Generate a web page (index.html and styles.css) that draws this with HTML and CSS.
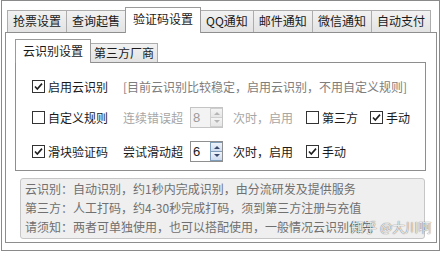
FILE: index.html
```html
<!DOCTYPE html>
<html lang="zh-CN">
<head>
<meta charset="utf-8">
<link rel="stylesheet" href="styles.css">
</head>
<body>
<div class="window">
  <div class="tabs">
    <div class="tab">抢票设置</div>
    <div class="tab">查询起售</div>
    <div class="tab active">验证码设置</div>
    <div class="tab">QQ通知</div>
    <div class="tab">邮件通知</div>
    <div class="tab">微信通知</div>
    <div class="tab">自动支付</div>
  </div>
  <div class="panel">
    <div class="subtabs">
      <div class="subtab active">云识别设置</div>
      <div class="subtab">第三方厂商</div>
    </div>
    <div class="group">
      <div class="row r1">
        <div class="opt"><span class="cb checked"><svg viewBox="0 0 13 13" width="13" height="13"><path d="M3 6.5 L5.3 9 L10 3.6" fill="none" stroke="#1e1e1e" stroke-width="1.6"/></svg></span><span>启用云识别</span></div>
        <div class="rest"><span class="note">[目前云识别比较稳定，启用云识别，不用自定义规则]</span></div>
      </div>
      <div class="row r2">
        <div class="opt"><span class="cb"></span><span>自定义规则</span></div>
        <div class="rest">
          <span class="dim lbl">连续错误超</span>
          <div class="spin disabled"><span class="val">8</span><span class="btns"><span class="btn up"></span><span class="btn down"></span></span></div>
          <span class="dim after">次时，启用</span>
          <div class="opt small"><span class="cb"></span><span>第三方</span></div>
          <div class="opt small"><span class="cb checked"><svg viewBox="0 0 13 13" width="13" height="13"><path d="M3 6.5 L5.3 9 L10 3.6" fill="none" stroke="#1e1e1e" stroke-width="1.6"/></svg></span><span>手动</span></div>
        </div>
      </div>
      <div class="row r3">
        <div class="opt"><span class="cb checked"><svg viewBox="0 0 13 13" width="13" height="13"><path d="M3 6.5 L5.3 9 L10 3.6" fill="none" stroke="#1e1e1e" stroke-width="1.6"/></svg></span><span>滑块验证码</span></div>
        <div class="rest">
          <span class="lbl">尝试滑动超</span>
          <div class="spin"><span class="val">6</span><span class="btns"><span class="btn up"></span><span class="btn down"></span></span></div>
          <span class="after">次时，启用</span>
          <div class="opt small"><span class="cb checked"><svg viewBox="0 0 13 13" width="13" height="13"><path d="M3 6.5 L5.3 9 L10 3.6" fill="none" stroke="#1e1e1e" stroke-width="1.6"/></svg></span><span>手动</span></div>
        </div>
      </div>
    </div>
    <div class="info">
      <p>云识别：自动识别，约1秒内完成识别，由分流研发及提供服务</p>
      <p>第三方：人工打码，约4-30秒完成打码，须到第三方注册与充值</p>
      <p>请须知：两者可单独使用，也可以搭配使用，一般情况云识别优先</p>
    </div>
  </div>
  <div class="watermark">知乎 @大川啊</div>
</div>
</body>
</html>
```

FILE: styles.css
```css
* { box-sizing: border-box; }
html, body { margin: 0; padding: 0; background: #fff; }
body {
  width: 441px; height: 253px; overflow: hidden;
  font-family: "Noto Sans CJK SC", "Microsoft YaHei", sans-serif;
  font-size: 12px; color: #1a1a1a;
}
.window {
  position: relative;
  margin-left: 1px;
  width: 439px; height: 251px;
  border: 1px solid #8a8a8a;
  background: #fff;
}
.tabs {
  display: flex; align-items: flex-end;
  height: 25px; margin-top: 6px; padding-left: 5px;
}
.tab {
  height: 22px; line-height: 20px;
  padding: 0 5px;
  border: 1px solid #adadad; border-bottom: none;
  background: linear-gradient(#f2f2f2, #e3e3e3);
  margin-left: -1px;
  white-space: nowrap;
}
.tab:first-child { margin-left: 0; }
.tab.active {
  position: relative; z-index: 1;
  height: 26px; margin-bottom: -1px;
  padding: 0 7px; line-height: 22px;
  background: #fff;
  border-color: #9a9a9a;
}
.panel {
  margin: 0 2px 0 3px;
  height: 211px;
  border: 1px solid #8e8e8e;
  background: #fff;
  padding: 6px 10px 0 9px;
}
.subtabs { display: flex; align-items: flex-end; height: 23px; }
.subtab {
  height: 19px; line-height: 17px;
  padding: 0 3px;
  border: 1px solid #adadad; border-bottom: none;
  background: linear-gradient(#f2f2f2, #e3e3e3);
  margin-left: -1px; white-space: nowrap;
}
.subtab.active {
  position: relative; z-index: 1;
  margin-left: 0;
  height: 24px; margin-bottom: -1px;
  padding: 0 7px; line-height: 22px;
  background: #fff; border-color: #9a9a9a;
}
.group {
  height: 109px;
  border: 1px solid #8e8e8e;
  padding: 13px 0 0 16px;
}
.row { display: flex; align-items: center; height: 20px; }
.row.r2 { margin-top: 11px; }
.row.r3 { margin-top: 14px; }
.opt { display: flex; align-items: center; gap: 3px; width: 91px; flex: none; white-space: nowrap; }
.opt.small { width: auto; margin-left: 13px; }
.opt.small + .opt.small { margin-left: 12px; }
.rest { display: flex; align-items: center; white-space: nowrap; }
.cb {
  display: inline-block; width: 13px; height: 13px; flex: none;
  border: 1px solid #333; background: #fff; position: relative;
}
.cb svg { position: absolute; left: -1px; top: -1px; }
.note { color: #7d7d7d; }
.dim { color: #a6a6a6; }
.lbl { width: 67px; }
.after { margin-left: 10px; }
.spin {
  display: flex; width: 33px; height: 21px;
  border: 1px solid #8f8f8f; background: #fff;
}
.spin .val { flex: 1; padding-left: 2px; line-height: 19px; font-size: 13px; font-family: "Liberation Sans", sans-serif; }
.spin .btns { width: 12px; display: flex; flex-direction: column; }
.spin .btn {
  flex: 1; position: relative;
  border: 1px solid #7f9db9; border-right: none;
  background: linear-gradient(#eef3fb, #cfdcf0);
}
.spin .btn.down { border-top: none; }
.spin .btn::after {
  content: ""; position: absolute; left: 3px; top: 3px;
  border-left: 3px solid transparent; border-right: 3px solid transparent;
}
.spin .btn.up::after { border-bottom: 3px solid #3c4a6a; }
.spin .btn.down::after { top: 2px; border-top: 3px solid #3c4a6a; }
.spin.disabled { background: #f3f3f3; border-color: #c4c4c4; }
.spin.disabled .val { color: #9a9a9a; }
.spin.disabled .btn { border-color: #cfcfcf; background: linear-gradient(#f4f4f4, #e6e6e6); }
.spin.disabled .btn.up::after { border-bottom-color: #b5b5b5; }
.spin.disabled .btn.down::after { border-top-color: #b5b5b5; }
.info {
  margin: 7px 1px 0 5px;
  height: 61px;
  border: 1px solid #c6c6c6; border-radius: 3px;
  background: #efefef;
  padding: 0 4px;
  color: #707070;
}
.info p { margin: 0; line-height: 19px; white-space: nowrap; }
.watermark {
  position: absolute; left: 349px; top: 216px;
  font-size: 13px; color: rgba(255,255,255,0.9);
  text-shadow: 0 0 1px rgba(0,0,0,0.55), 0 0 1px rgba(0,0,0,0.35);
  white-space: nowrap;
}
```
